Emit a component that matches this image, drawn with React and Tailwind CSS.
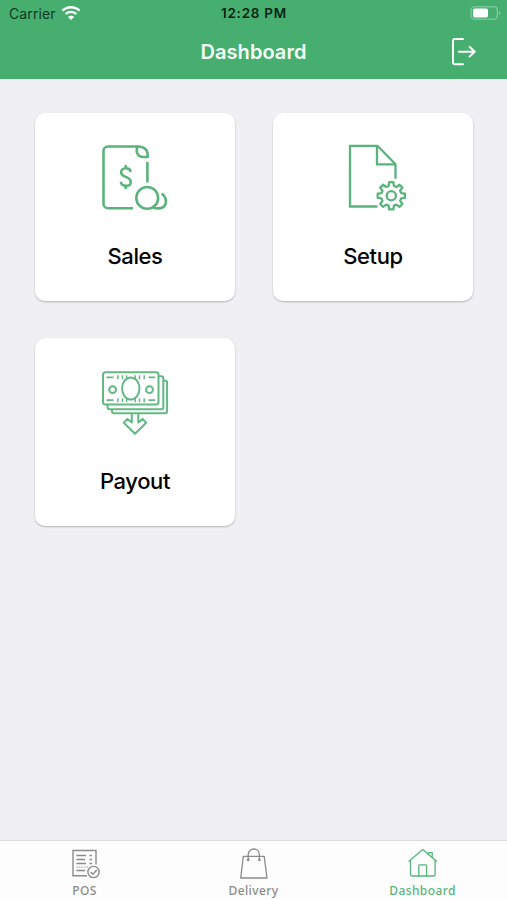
import React, { useState } from 'react';

const SalesIcon = () => (
  <svg width="70" height="70" viewBox="10 10 70 70" fill="none" stroke="#5bb37c" strokeWidth="2.6" strokeLinecap="butt" strokeLinejoin="round">
    <path d="M43 74.2H18a4.5 4.5 0 0 1-4.5-4.5V17a4.5 4.5 0 0 1 4.5-4.5H49.5C55.5 13.2 58.2 17.2 57.8 23H52.5C47.5 22.5 45.3 17.7 47.6 12.8" />
    <path d="M57.4 28V48.5" />
    <path d="M40.5 38C40.5 35.4 38.4 34.2 35.8 34.2C33 34.2 31.1 36 31.1 38.2C31.1 43.8 40.8 42 40.8 48C40.8 50.4 38.8 51.9 36 51.9C33 51.9 30.9 50.4 30.9 47.8" />
    <path d="M35.8 31V34.5M35.8 51.5V55" />
    <circle cx="57.2" cy="63.9" r="10.9" />
    <path d="M71.8 59.4C78 64.9 77.5 73.8 68.5 74.4C66.5 74.5 64.7 74.2 63.2 73.4" />
  </svg>
);

// 8 teeth around the hub
const gearPoints = Array.from({ length: 8 }, (_, i) =>
  [[-15, 10.2], [-8.5, 13.8], [8.5, 13.8], [15, 10.2]].map(([offset, r]) => {
    const a = ((i * 45 + offset) * Math.PI) / 180;
    return `${(56.3 + r * Math.cos(a)).toFixed(2)},${(61.8 + r * Math.sin(a)).toFixed(2)}`;
  }).join(' ')
).join(' ');

const SetupIcon = () => (
  <svg width="70" height="70" viewBox="3 10 70 70" fill="none" stroke="#5bb37c" strokeWidth="2.3">
    <path d="M42.5 72.5H15V11.8H42.5L60.5 30.1V44.7" />
    <path d="M42 11.8V30.3H60.5" />
    <polygon points={gearPoints} strokeWidth="2.3" strokeLinejoin="round" />
    <circle cx="56.3" cy="61.8" r="4.6" />
  </svg>
);

const PayoutIcon = () => (
  <svg width="70" height="70" viewBox="10 10 70 70" fill="none" stroke="#63b883" strokeWidth="2" strokeLinejoin="round">
    <rect x="13" y="13.2" width="55.5" height="32.3" rx="2.5" />
    <path d="M68.5 17.2H71.5a1.8 1.8 0 0 1 1.8 1.8V48.2a2 2 0 0 1-2 2H19.5a2 2 0 0 1-2-2V45.7" />
    <path d="M73.3 21.7H75.3a1.8 1.8 0 0 1 1.8 1.8V52.2a2 2 0 0 1-2 2H24a2 2 0 0 1-2-2V50.2" />
    <ellipse cx="40.8" cy="29.5" rx="8.7" ry="11" />
    <circle cx="22.6" cy="30.7" r="3.4" />
    <circle cx="59.5" cy="30.7" r="3.4" />
    <path strokeWidth="1.7" d="M16.5 18.4H23.5M58.5 18.4H65M16.5 41.2H23.5M58.5 41.2H65" />
    <path strokeWidth="1.5" d="M27.8 16.2V20.2M32.5 16.2V20.2M36.6 16.2V20.2M45.2 16.2V20.2M49.5 16.2V20.2M54.2 16.2V20.2M27.8 39.2V43.2M32.5 39.2V43.2M36.6 39.2V43.2M45.2 39.2V43.2M49.5 39.2V43.2M54.2 39.2V43.2" />
    <path d="M41.8 54.7V63.6L37.4 59.9L33.8 63.7L45 74.7L56.2 63.7L52.6 59.9L48.3 63.6V54.7" />
  </svg>
);

const LogoutIcon = () => (
  <svg width="26" height="30" viewBox="0 0 26 30" fill="none" stroke="white" strokeWidth="1.9" strokeLinecap="round" strokeLinejoin="round">
    <path d="M12 2H4a2 2 0 0 0-2 2V25.3a2 2 0 0 0 2 2H12" />
    <path d="M8 14.7H23.5M18.5 9.8L23.8 14.7L18.5 19.6" />
  </svg>
);

const WifiIcon = () => (
  <svg width="20" height="15" viewBox="0 0 20 15" fill="none" stroke="white" strokeWidth="2.4">
    <path d="M1.4 4.7C6.2 0.1 13.8 0.1 18.6 4.7" />
    <path d="M4.6 8C7.6 5.1 12.4 5.1 15.4 8" />
    <path d="M10 14L6.9 10.9C8.5 9.2 11.5 9.2 13.1 10.9Z" fill="white" stroke="none" />
  </svg>
);

const BatteryIcon = () => (
  <svg width="31" height="15" viewBox="0 0 31 15" fill="none">
    <rect x="1" y="0.8" width="26.3" height="12.4" rx="3.5" stroke="#8fcda6" strokeWidth="1.1" />
    <rect x="3" y="2.4" width="15" height="9.2" rx="1.8" fill="white" />
    <path d="M29 4.9C30.8 5.7 30.8 8.4 29 9.2Z" fill="#8fcda6" />
  </svg>
);

const PosIcon = () => (
  <svg width="30" height="32" viewBox="0 0 30 32" fill="none" stroke="currentColor" strokeWidth="1.4">
    <path d="M17 28.8H3V3.5H26V17.5" />
    <path strokeWidth="1.5" d="M6.4 8.5H16M6.4 12.5H15M6.4 16.5H16M6.4 23.5H15M19.5 8.5H22M19.5 12.5H22M19.5 16.5H22" />
    <path strokeWidth="0.8" strokeDasharray="1.5 1" d="M6.4 20H18" />
    <circle cx="23.5" cy="25" r="5.6" />
    <path d="M20.5 25L22.9 27.3L26.8 23" />
  </svg>
);

const BagIcon = () => (
  <svg width="30" height="32" viewBox="0 0 30 32" fill="none" stroke="currentColor" strokeWidth="1.3" strokeLinejoin="round">
    <path d="M4.3 9.4H25.2L28 31H1.7Z" />
    <path d="M9.2 12.5V7.7C9.2 0.1 20.4 0.1 20.4 7.7V12.5" />
    <circle cx="9.2" cy="13" r="0.7" />
    <circle cx="20.4" cy="13" r="0.7" />
  </svg>
);

const HomeIcon = () => (
  <svg width="30" height="32" viewBox="0 0 30 32" fill="none" stroke="currentColor" strokeWidth="1.3" strokeLinejoin="round" strokeLinecap="round">
    <path d="M1 14.2L14.7 2.5L28.5 14.2M2.5 13V27.5a1.5 1.5 0 0 0 1.5 1.5H25.6a1.5 1.5 0 0 0 1.5-1.5V13" />
    <path d="M20.6 7.2V5.7H24.2V10.3" />
    <path d="M10.8 29V19a1.2 1.2 0 0 1 1.2-1.2H17.4A1.2 1.2 0 0 1 18.6 19V29" />
  </svg>
);

const cards = [
  { label: 'Sales', Icon: SalesIcon },
  { label: 'Setup', Icon: SetupIcon },
  { label: 'Payout', Icon: PayoutIcon },
];

const tabs = [
  { label: 'POS', Icon: PosIcon },
  { label: 'Delivery', Icon: BagIcon },
  { label: 'Dashboard', Icon: HomeIcon },
];

const App = () => {
  const [activeTab, setActiveTab] = useState('Dashboard');

  return (
    <div className="h-[900px] w-full bg-[#efeff4] flex flex-col overflow-hidden font-['Inter',sans-serif]">
      {/* Header */}
      <header className="h-[79px] shrink-0 bg-[#46af70]">
        <div className="h-[27px] grid grid-cols-3 items-center pl-[7px] pr-[6px]">
          <div className="flex items-center gap-[5px] pl-[2px]">
            <span className="text-[14px] text-[#10371f] tracking-[0.1px]">Carrier</span>
            <WifiIcon />
          </div>
          <span className="text-center text-[13.5px] font-semibold tracking-[0.75px] text-[#0a2413]">12:28 PM</span>
          <div className="flex justify-end">
            <BatteryIcon />
          </div>
        </div>
        <div className="h-[50px] grid grid-cols-[60px_1fr_60px] items-center">
          <h1 className="col-start-2 text-center text-[20px] font-semibold tracking-[0.05px] text-[#f4fff7]">Dashboard</h1>
          <button aria-label="Log out" className="pl-1">
            <LogoutIcon />
          </button>
        </div>
      </header>

      {/* Cards */}
      <main className="flex-1 pt-[34px] pl-[35px] pr-[34px]">
        <div className="grid grid-cols-2 gap-x-[38px] gap-y-[37px]">
          {cards.map(({ label, Icon }) => (
            <button
              key={label}
              className="h-[188px] bg-white rounded-[10px] shadow-[0_1px_2px_rgba(0,0,0,0.25)] flex flex-col items-center pt-[31px]"
            >
              <Icon />
              <span className="mt-[26px] text-[22px] leading-8 font-medium tracking-[-0.4px] text-black">{label}</span>
            </button>
          ))}
        </div>
      </main>

      {/* Tab bar */}
      <nav className="h-[60px] shrink-0 bg-[#fdfdfd] border-t border-[#dcdce0] grid grid-cols-3">
        {tabs.map(({ label, Icon }) => (
          <button
            key={label}
            onClick={() => setActiveTab(label)}
            className={`flex flex-col items-center pt-[6px] ${activeTab === label ? 'text-[#55b57b]' : 'text-[#8b8b8b]'}`}
          >
            <Icon />
            <span className="mt-[4px] text-[12px] leading-4 font-medium tracking-[0.4px] font-['Noto_Sans','Open_Sans',sans-serif]">{label}</span>
          </button>
        ))}
      </nav>
    </div>
  );
};

export default App;
